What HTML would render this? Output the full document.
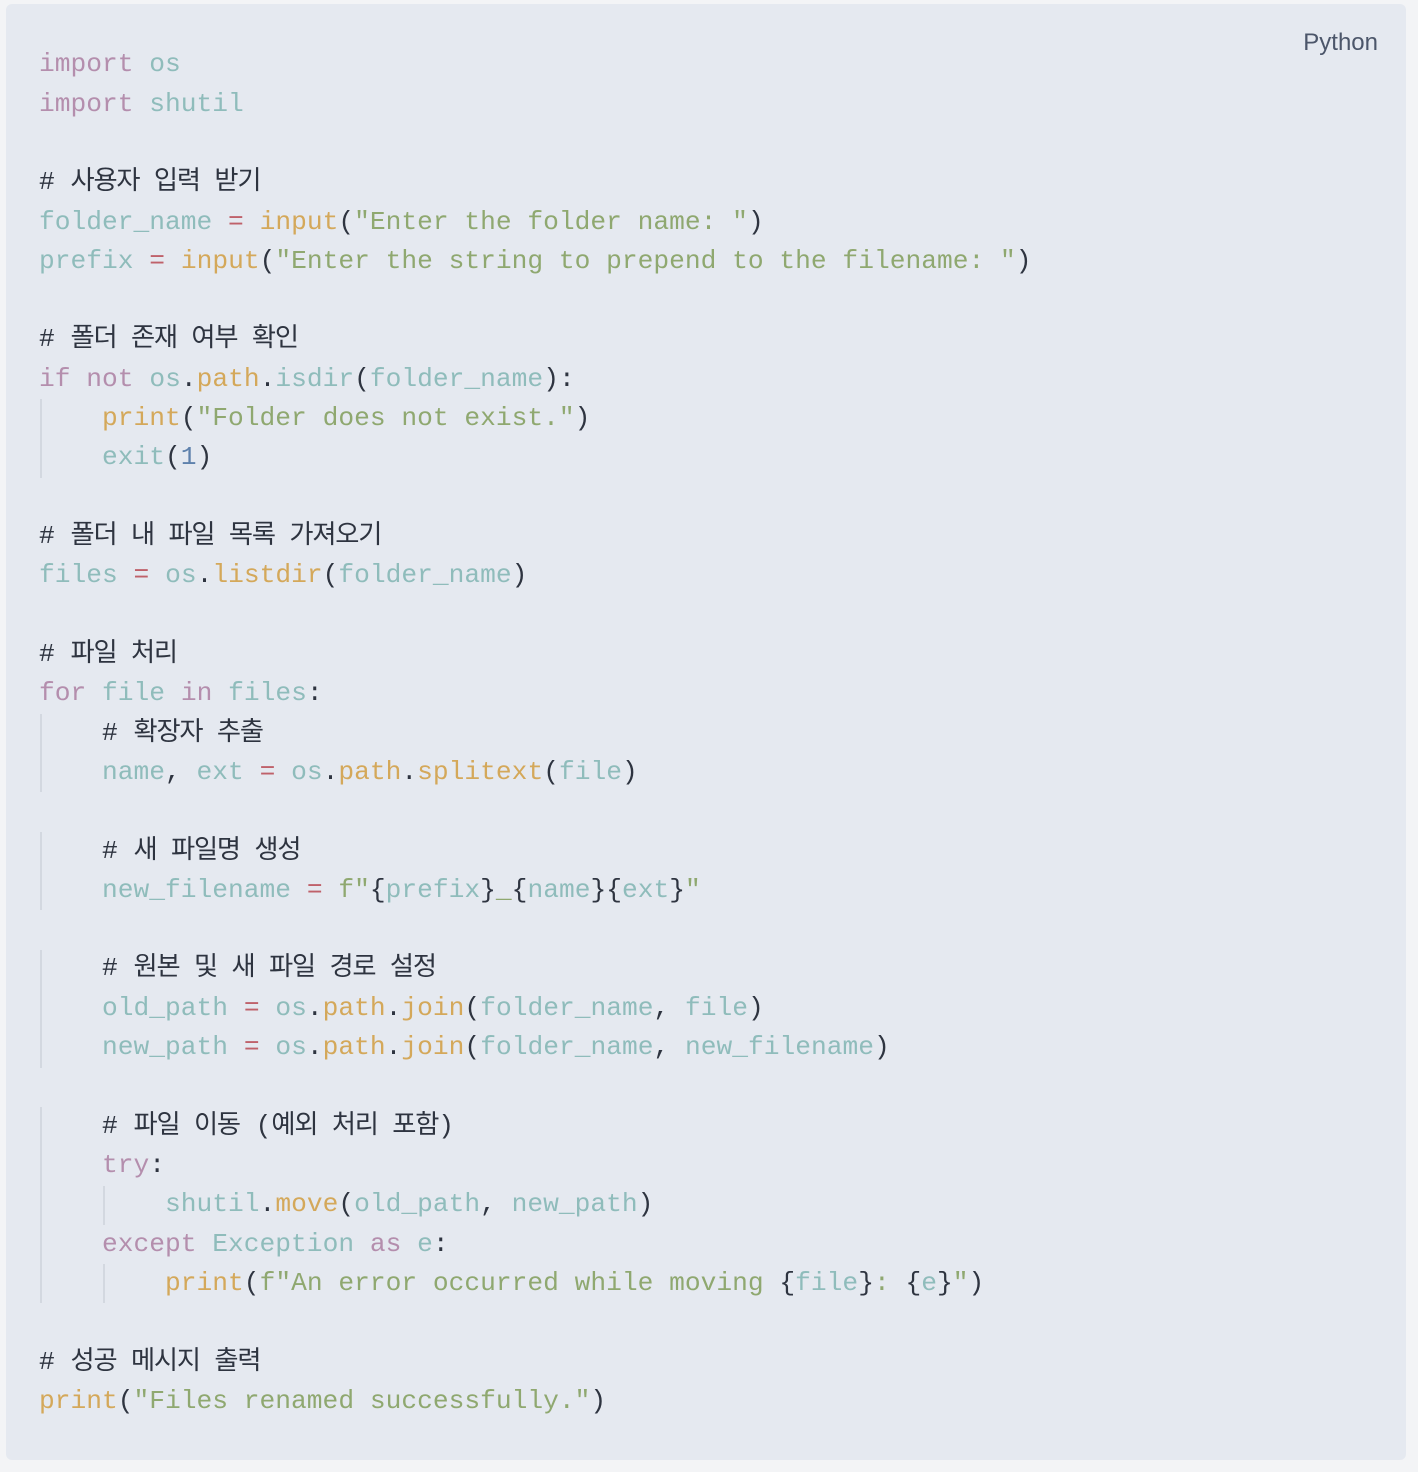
<!DOCTYPE html>
<html><head><meta charset="utf-8"><style>
html,body{margin:0;padding:0;background:#f3f4f6;width:1418px;height:1472px;overflow:hidden}
.box{position:absolute;left:6px;top:4px;width:1400px;height:1456px;background:#e5e9f0;border-radius:6px}
.lang{position:absolute;right:28px;top:25px;font:24px "Liberation Sans",sans-serif;color:#4c566a}
pre{position:absolute;left:33px;top:41.3px;margin:0;font-family:"Liberation Mono","Noto Sans CJK KR",monospace;font-size:26.25px;line-height:39.32px;color:#2e3440;white-space:pre}
.k{color:#b48ead}.v{color:#8fbcbb}.o{color:#bf616a}.f{color:#d4a85a}.s{color:#8fa870}.n{color:#5e81ac}.c{color:#2e3440}
.h{letter-spacing:-1.2px}
.g{position:absolute;width:2px;background:#d3d8e0}
</style></head><body><div class="box">
<div class="lang">Python</div>
<div class="g" style="left:34px;top:395.2px;height:78.6px"></div>
<div class="g" style="left:34px;top:709.7px;height:78.6px"></div>
<div class="g" style="left:34px;top:827.7px;height:78.6px"></div>
<div class="g" style="left:34px;top:945.7px;height:118px"></div>
<div class="g" style="left:34px;top:1102.9px;height:196.6px"></div>
<div class="g" style="left:97px;top:1181.5px;height:39.3px"></div>
<div class="g" style="left:97px;top:1260.2px;height:39.3px"></div>
<pre><span class="k">import</span> <span class="v">os</span>
<span class="k">import</span> <span class="v">shutil</span>

<span class="c"># <span class="h">사용자 입력 받기</span></span>
<span class="v">folder_name</span> <span class="o">=</span> <span class="f">input</span>(<span class="s">"Enter the folder name: "</span>)
<span class="v">prefix</span> <span class="o">=</span> <span class="f">input</span>(<span class="s">"Enter the string to prepend to the filename: "</span>)

<span class="c"># <span class="h">폴더 존재 여부 확인</span></span>
<span class="k">if</span> <span class="k">not</span> <span class="v">os</span>.<span class="f">path</span>.<span class="v">isdir</span>(<span class="v">folder_name</span>):
    <span class="f">print</span>(<span class="s">"Folder does not exist."</span>)
    <span class="v">exit</span>(<span class="n">1</span>)

<span class="c"># <span class="h">폴더 내 파일 목록 가져오기</span></span>
<span class="v">files</span> <span class="o">=</span> <span class="v">os</span>.<span class="f">listdir</span>(<span class="v">folder_name</span>)

<span class="c"># <span class="h">파일 처리</span></span>
<span class="k">for</span> <span class="v">file</span> <span class="k">in</span> <span class="v">files</span>:
    <span class="c"># <span class="h">확장자 추출</span></span>
    <span class="v">name</span>, <span class="v">ext</span> <span class="o">=</span> <span class="v">os</span>.<span class="f">path</span>.<span class="f">splitext</span>(<span class="v">file</span>)

    <span class="c"># <span class="h">새 파일명 생성</span></span>
    <span class="v">new_filename</span> <span class="o">=</span> <span class="s">f"</span>{<span class="v">prefix</span>}<span class="s">_</span>{<span class="v">name</span>}{<span class="v">ext</span>}<span class="s">"</span>

    <span class="c"># <span class="h">원본 및 새 파일 경로 설정</span></span>
    <span class="v">old_path</span> <span class="o">=</span> <span class="v">os</span>.<span class="f">path</span>.<span class="f">join</span>(<span class="v">folder_name</span>, <span class="v">file</span>)
    <span class="v">new_path</span> <span class="o">=</span> <span class="v">os</span>.<span class="f">path</span>.<span class="f">join</span>(<span class="v">folder_name</span>, <span class="v">new_filename</span>)

    <span class="c"># <span class="h">파일 이동</span> (<span class="h">예외 처리 포함</span>)</span>
    <span class="k">try</span>:
        <span class="v">shutil</span>.<span class="f">move</span>(<span class="v">old_path</span>, <span class="v">new_path</span>)
    <span class="k">except</span> <span class="v">Exception</span> <span class="k">as</span> <span class="v">e</span>:
        <span class="f">print</span>(<span class="s">f"An error occurred while moving </span>{<span class="v">file</span>}<span class="s">: </span>{<span class="v">e</span>}<span class="s">"</span>)

<span class="c"># <span class="h">성공 메시지 출력</span></span>
<span class="f">print</span>(<span class="s">"Files renamed successfully."</span>)</pre>
</div></body></html>
